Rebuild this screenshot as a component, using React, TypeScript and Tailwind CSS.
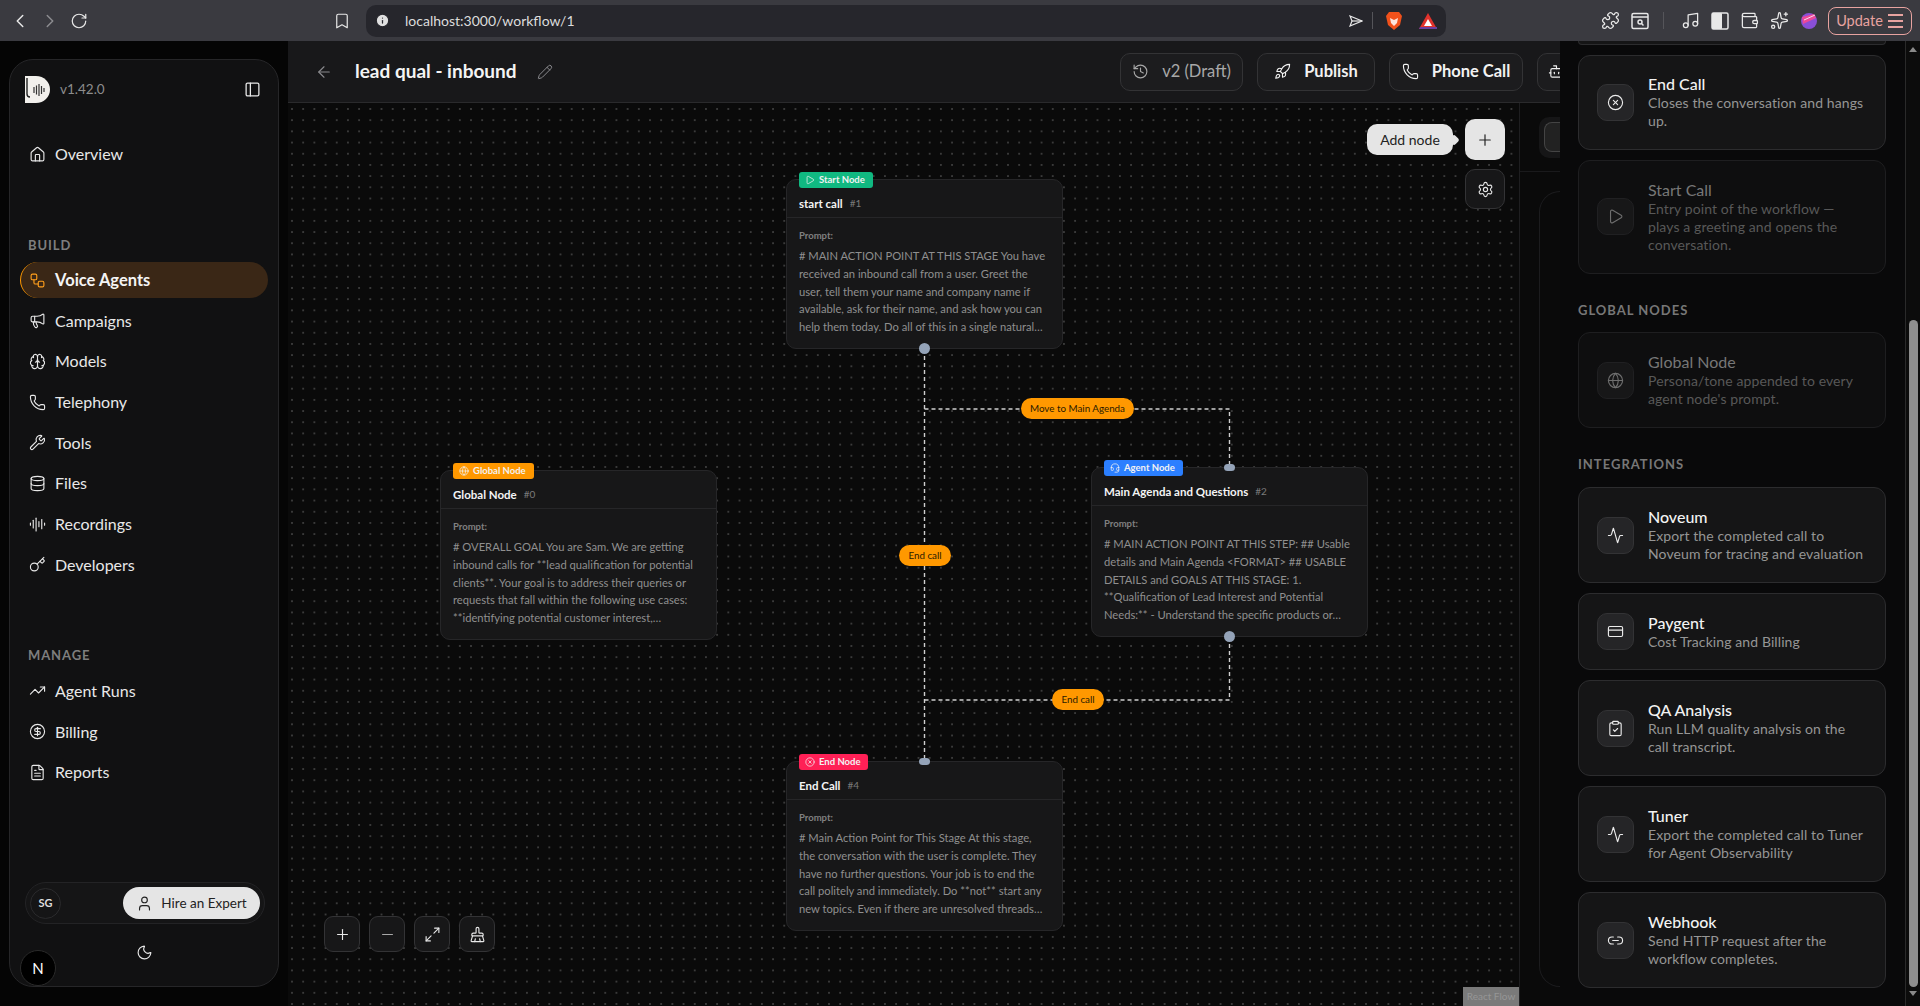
import React from "react";
import {
  Activity, ArrowLeft, AudioLines, Bookmark, Bot, Brain, BrushCleaning, ChevronLeft, ChevronRight,
  CircleDollarSign, CircleX, ClipboardCheck, CreditCard, Database, FileText, Globe, Headset, History,
  House, Info, Key, Link2, Maximize2, Megaphone, Minus, Moon, Music, PanelLeft, Pencil, Phone,
  Play, Plus, Puzzle, RotateCw, Rocket, Settings, Sparkles, TrendingUp, User, Wallet, Workflow, Wrench,
} from "lucide-react";

const nav1 = [
  { icon: Megaphone, label: "Campaigns" },
  { icon: Brain, label: "Models" },
  { icon: Phone, label: "Telephony" },
  { icon: Wrench, label: "Tools" },
  { icon: Database, label: "Files" },
  { icon: AudioLines, label: "Recordings" },
  { icon: Key, label: "Developers" },
];
const nav2 = [
  { icon: TrendingUp, label: "Agent Runs" },
  { icon: CircleDollarSign, label: "Billing" },
  { icon: FileText, label: "Reports" },
];

function NavItem({ icon: Icon, label }: { icon: any; label: string }) {
  return (
    <div className="flex h-[36px] items-center gap-[9px] pl-[9px] text-[16px] text-[#e8e8e8]">
      <Icon size={17} strokeWidth={1.6} className="shrink-0" />
      <span>{label}</span>
    </div>
  );
}

function SectionLabel({ children }: { children: React.ReactNode }) {
  return <div className="h-[16px] pl-[8px] text-[13px] font-bold leading-[16px] tracking-[0.9px] text-[#7e7e7e]">{children}</div>;
}

function Sidebar() {
  return (
    <aside className="h-full w-[288px] shrink-0 bg-[#050505] pl-[9px] pt-[18px]">
      <div className="relative flex h-[928px] w-[270px] flex-col rounded-[24px] border border-[#262628] bg-[#111112] px-[10px]">
        <div className="mt-[16px] flex h-[27px] items-center pl-[5px]">
          <svg width="25" height="27" viewBox="0 0 25 27">
            <path d="M0 0H11C19 0 25 6 25 13.5C25 21 19 27 11 27H0Z" fill="#f2f0ec" />
            <path d="M2 2V18" stroke="#222" strokeWidth="1.4" />
            <path d="M5 21C3 21 2 20 2 18" stroke="#222" strokeWidth="1.4" fill="none" />
            <path d="M9 11V17M11.5 9.5V18.5M14 8V20M16.5 10V18M19 12V16" stroke="#333" strokeWidth="1.2" />
          </svg>
          <span className="ml-[10px] text-[13.5px] text-[#8d8d8d]">v1.42.0</span>
          <PanelLeft size={17} strokeWidth={1.8} className="ml-auto mr-[7px] text-[#e8e8e8]" />
        </div>
        <div className="mt-[33px]">
          <NavItem icon={House} label="Overview" />
        </div>
        <div className="mt-[65px]">
          <SectionLabel>BUILD</SectionLabel>
        </div>
        <div className="mt-[9px] flex flex-col gap-[4.7px]">
          <div className="flex h-[36px] items-center gap-[9px] rounded-full border-l border-[#ff9800] bg-[#3a2716] pl-[8px] text-[16.5px] font-bold text-[#f4f4f4]">
            <Workflow size={17} strokeWidth={1.6} className="shrink-0 text-[#ff9f1c]" />
            <span>Voice Agents</span>
          </div>
          {nav1.map((n) => (
            <NavItem key={n.label} {...n} />
          ))}
        </div>
        <div className="mt-[64px]">
          <SectionLabel>MANAGE</SectionLabel>
        </div>
        <div className="mt-[10px] flex flex-col gap-[4.7px]">
          {nav2.map((n) => (
            <NavItem key={n.label} {...n} />
          ))}
        </div>
        <div className="mt-auto mb-[62px] ml-[5px] flex h-[42px] w-[240px] items-center justify-between rounded-full border border-[#232325] bg-[#151516] px-[4px]">
          <div className="flex h-[31px] w-[31px] items-center justify-center rounded-full border border-[#2a2a2c] text-[11px] font-bold text-[#dedede]">SG</div>
          <div className="flex h-[32px] w-[137px] items-center justify-center gap-[8px] rounded-full bg-[#e5e5e5] text-[13.5px] text-[#222]">
            <User size={17} strokeWidth={1.6} />
            <span>Hire an Expert</span>
          </div>
        </div>
        <Moon size={17} strokeWidth={1.6} className="absolute bottom-[25px] left-[126px] text-[#e8e8e8]" />
        <div className="absolute bottom-[0px] left-[10px] flex h-[36px] w-[36px] items-center justify-center rounded-full border border-[#2a2a2a] bg-black text-[15px] text-white">N</div>
      </div>
    </aside>
  );
}

function HeaderButton({ icon: Icon, label, muted, width }: { icon: any; label: string; muted?: boolean; width: string }) {
  return (
    <div className={`flex h-[38px] shrink-0 items-center justify-center gap-[13px] rounded-[10px] border border-[#333335] bg-[#1c1c1e] ${width} ${muted ? "text-[16.5px] text-[#a8a8a8]" : "text-[16.5px] font-bold text-[#f2f2f2]"}`}>
      <Icon size={17} strokeWidth={1.6} />
      <span>{label}</span>
    </div>
  );
}

function NodeCard({ pos, badge, badgeIcon: BadgeIcon, badgeClass, title, num, lines, top, bottom }: any) {
  return (
    <div className={`absolute h-[170px] w-[277px] rounded-[10px] border border-[#262628] bg-[#171718] ${pos}`}>
      <div className={`absolute left-[12px] top-[-8px] flex h-[15.5px] items-center gap-[4px] rounded-[3px] pl-[6px] pr-[6px] text-[9.5px] font-bold text-[#f2f2f2] ${badgeClass}`}>
        <BadgeIcon size={10} strokeWidth={1.8} />
        <span>{badge}</span>
      </div>
      <div className="flex h-[38px] items-end gap-[7px] border-b border-[#262628] pb-[6px] pl-[12px] text-[11.5px] leading-[15px]">
        <span className="font-bold text-[#f4f4f4]">{title}</span>
        <span className="text-[10px] text-[#7b7b7b]">{num}</span>
      </div>
      <div className="pl-[12px] pt-[11px]">
        <div className="text-[9.5px] font-bold leading-[14px] text-[#808080]">Prompt:</div>
        <div className="mt-[4px] text-[11.2px] leading-[17.8px] text-[#8f8f8f]">
          {lines.map((l: string) => (
            <div key={l} className="whitespace-nowrap">{l}</div>
          ))}
        </div>
      </div>
      {top && <div className="absolute left-[132px] top-[-4px] h-[7px] w-[11px] rounded-full bg-[#94a3b8]" />}
      {bottom && <div className="absolute bottom-[-6px] left-[132px] h-[11px] w-[11px] rounded-full bg-[#94a3b8]" />}
    </div>
  );
}

function Pill({ pos, children, width }: { pos: string; children: string; width: string }) {
  return (
    <div className={`absolute flex h-[21px] items-center justify-center rounded-full bg-[#ff9800] text-[9.8px] text-[#2a1a00] ${pos} ${width}`}>{children}</div>
  );
}

function CtrlBtn({ children }: { children: React.ReactNode }) {
  return <div className="flex h-[36px] w-[36px] items-center justify-center rounded-[9px] border border-[#333335] bg-[#171718] text-[#e8e8e8]">{children}</div>;
}

function Canvas() {
  return (
    <div className="relative h-full w-[1232px] shrink-0 overflow-hidden border-r border-[#1e1e20] bg-[#0a0a0a] bg-[radial-gradient(circle,#3a3a3a_0.7px,transparent_1px)] bg-[length:11.2px_11.2px] bg-[position:-1.6px_0.4px]">
      <svg className="absolute left-0 top-0" width="1232" height="903" fill="none">
        <path d="M636.5 246V658" stroke="#cfcfcf" strokeWidth="1.4" strokeDasharray="4 3" />
        <path d="M636.5 306H941.5V364" stroke="#cfcfcf" strokeWidth="1.4" strokeDasharray="4 3" />
        <path d="M941.5 534V597H636.5" stroke="#cfcfcf" strokeWidth="1.4" strokeDasharray="4 3" />
      </svg>
      <NodeCard
        pos="left-[498px] top-[76px]" badge="Start Node" badgeIcon={Play} badgeClass="w-[74px] bg-[#10b981]" title="start call" num="#1" bottom
        lines={["# MAIN ACTION POINT AT THIS STAGE You have", "received an inbound call from a user. Greet the", "user, tell them your name and company name if", "available, ask for their name, and ask how you can", "help them today. Do all of this in a single natural…"]}
      />
      <NodeCard
        pos="left-[152px] top-[367px]" badge="Global Node" badgeIcon={Globe} badgeClass="w-[81px] bg-[#ff9800]" title="Global Node" num="#0"
        lines={["# OVERALL GOAL You are Sam. We are getting", "inbound calls for **lead qualification for potential", "clients**. Your goal is to address their queries or", "requests that fall within the following use cases:", "**identifying potential customer interest,…"]}
      />
      <NodeCard
        pos="left-[803px] top-[364px]" badge="Agent Node" badgeIcon={Headset} badgeClass="w-[79px] bg-[#2b7fff]" title="Main Agenda and Questions" num="#2" top bottom
        lines={["# MAIN ACTION POINT AT THIS STEP: ## Usable", "details and Main Agenda <FORMAT> ## USABLE", "DETAILS and GOALS AT THIS STAGE: 1.", "**Qualification of Lead Interest and Potential", "Needs:** - Understand the specific products or…"]}
      />
      <NodeCard
        pos="left-[498px] top-[658px]" badge="End Node" badgeIcon={CircleX} badgeClass="w-[69px] bg-[#ff2056]" title="End Call" num="#4" top
        lines={["# Main Action Point for This Stage At this stage,", "the conversation with the user is complete. They", "have no further questions. Your job is to end the", "call politely and immediately. Do **not** start any", "new topics. Even if there are unresolved threads…"]}
      />
      <Pill pos="left-[733px] top-[295px]" width="w-[113px]">Move to Main Agenda</Pill>
      <Pill pos="left-[611px] top-[442px]" width="w-[52px]">End call</Pill>
      <Pill pos="left-[764px] top-[586px]" width="w-[52px]">End call</Pill>

      <div className="absolute left-[36px] top-[813px] flex gap-[9px]">
        <CtrlBtn><Plus size={17} strokeWidth={1.6} /></CtrlBtn>
        <CtrlBtn><Minus size={17} strokeWidth={1.6} className="text-[#a8a8a8]" /></CtrlBtn>
        <CtrlBtn><Maximize2 size={17} strokeWidth={1.6} /></CtrlBtn>
        <CtrlBtn><BrushCleaning size={17} strokeWidth={1.6} /></CtrlBtn>
      </div>

      <div className="absolute left-[1079px] top-[21px] flex h-[31px] w-[86px] items-center justify-center rounded-[10px] bg-[#e5e5e5] text-[14px] text-[#222]">Add node</div>
      <div className="absolute left-[1162px] top-[32.5px] h-[8px] w-[8px] rotate-45 rounded-[2px] bg-[#e5e5e5]" />
      <div className="absolute left-[1177px] top-[16px] flex h-[41px] w-[40px] items-center justify-center rounded-[10px] bg-[#e5e5e5] text-[#222]"><Plus size={18} strokeWidth={1.6} /></div>
      <div className="absolute left-[1177px] top-[66px] flex h-[40px] w-[40px] items-center justify-center rounded-[10px] border border-[#333335] bg-[#171718] text-[#e8e8e8]"><Settings size={17} strokeWidth={1.6} /></div>

      <div className="absolute bottom-0 right-0 flex h-[19px] w-[56px] items-center justify-center bg-[#7a7a7a] text-[10px] text-[#969696]">React Flow</div>
    </div>
  );
}

function ToolCard({ icon: Icon, title, desc, h, dim }: { icon: any; title: string; desc: string[]; h: string; dim?: boolean }) {
  return (
    <div className={`flex shrink-0 items-center gap-[14px] rounded-[12px] border pl-[18px] ${h} ${dim ? "border-[#1e1e20] bg-[#0e0e0f]" : "border-[#2c2c2e] bg-[#151516]"}`}>
      <div className={`flex h-[37px] w-[37px] shrink-0 items-center justify-center rounded-[10px] border ${dim ? "border-[#202022] bg-[#171718] text-[#6e6e6e]" : "border-[#333335] bg-[#252527] text-[#ececec]"}`}>
        <Icon size={17} strokeWidth={1.6} />
      </div>
      <div>
        <div className={`text-[16px] leading-[20px] ${dim ? "text-[#777]" : "font-medium text-[#f2f2f2]"}`}>{title}</div>
        <div className={`text-[14px] leading-[18px] tracking-[0.1px] ${dim ? "text-[#585858]" : "text-[#959595]"}`}>
          {desc.map((d) => (
            <div key={d} className="whitespace-nowrap">{d}</div>
          ))}
        </div>
      </div>
    </div>
  );
}

function DrawerLabel({ children, cls }: { children: string; cls: string }) {
  return <div className={`h-[16px] text-[13px] font-bold leading-[16px] tracking-[1px] text-[#777] ${cls}`}>{children}</div>;
}

function Drawer() {
  return (
    <div className="flex h-full w-[345px] shrink-0 flex-col overflow-hidden bg-[#09090a] pl-[18px] pr-[19px]">
      <div className="h-[4px] shrink-0 rounded-b-[12px] border-x border-b border-[#2c2c2e] bg-[#151516]" />
      <div className="mt-[9.5px] flex flex-col gap-[9.5px]">
        <ToolCard icon={CircleX} title="End Call" desc={["Closes the conversation and hangs", "up."]} h="h-[95.5px]" />
        <ToolCard icon={Play} title="Start Call" dim desc={["Entry point of the workflow —", "plays a greeting and opens the", "conversation."]} h="h-[114.5px]" />
      </div>
      <DrawerLabel cls="mt-[28px]">GLOBAL NODES</DrawerLabel>
      <div className="mt-[14px]">
        <ToolCard icon={Globe} title="Global Node" dim desc={["Persona/tone appended to every", "agent node's prompt."]} h="h-[96px]" />
      </div>
      <DrawerLabel cls="mt-[28px]">INTEGRATIONS</DrawerLabel>
      <div className="mt-[15px] flex flex-col gap-[10px]">
        <ToolCard icon={Activity} title="Noveum" desc={["Export the completed call to", "Noveum for tracing and evaluation"]} h="h-[96px]" />
        <ToolCard icon={CreditCard} title="Paygent" desc={["Cost Tracking and Billing"]} h="h-[77px]" />
        <ToolCard icon={ClipboardCheck} title="QA Analysis" desc={["Run LLM quality analysis on the", "call transcript."]} h="h-[96px]" />
        <ToolCard icon={Activity} title="Tuner" desc={["Export the completed call to Tuner", "for Agent Observability"]} h="h-[96px]" />
        <ToolCard icon={Link2} title="Webhook" desc={["Send HTTP request after the", "workflow completes."]} h="h-[96px]" />
      </div>
    </div>
  );
}

function Scrollbar() {
  return (
    <div className="flex h-full w-[15px] shrink-0 flex-col items-center border-l border-[#2a2a2a] bg-[#0c0c0c]">
      <div className="mt-[6px] h-0 w-0 border-x-[4px] border-b-[5px] border-x-transparent border-b-[#8a8a8a]" />
      <div className="mt-[268px] h-[667px] w-[9px] shrink-0 rounded-full bg-[#8e8e8e]" />
      <div className="mt-[4px] h-0 w-0 border-x-[4px] border-t-[5px] border-x-transparent border-t-[#8a8a8a]" />
    </div>
  );
}

function Toolbar() {
  return (
    <div className="flex h-[41px] w-full shrink-0 items-center bg-[#3a3a40] text-[#e8e8e8]">
      <div className="flex w-[355px] items-center pl-[9px]">
        <ChevronLeft size={22} strokeWidth={1.6} />
        <ChevronRight size={22} strokeWidth={1.6} className="ml-[8px] text-[#8c8c90]" />
        <RotateCw size={18} strokeWidth={1.6} className="ml-[9px]" />
        <Bookmark size={18} strokeWidth={1.6} className="ml-[245px]" />
      </div>
      <div className="ml-[11px] flex h-[32px] w-[1080px] items-center rounded-[10px] bg-[#26262c] pl-[9px]">
        <Info size={15} fill="#e0e0e0" stroke="#26262c" strokeWidth={2} />
        <span className="ml-[15px] text-[14px] text-[#dcdcdc]">localhost:3000/workflow/1</span>
        <svg width="14" height="12" viewBox="0 0 14 12" fill="none" stroke="#e8e8e8" strokeWidth="1.2" className="ml-auto">
          <path d="M1 1L13 6L1 11L3 6Z" />
          <path d="M3 6H13" />
        </svg>
        <div className="ml-[9px] h-[17px] w-px bg-[#55555a]" />
        <svg width="18" height="20" viewBox="0 0 18 20" className="ml-[12px]">
          <path d="M4 1H14L17 5L15 14L9 19L3 14L1 5Z" fill="#f1511b" />
          <path d="M5 7L9 9L13 7L12 12L9 15L6 12Z" fill="#fff" opacity=".85" />
        </svg>
        <svg width="20" height="18" viewBox="0 0 20 18" className="ml-[15px] mr-[8px]">
          <path d="M10 1L19 17H1Z" fill="#e1322c" />
          <path d="M10 7L14 14H6Z" fill="#fff" />
          <path d="M1 17H19V15H2Z" fill="#6b3fa0" />
        </svg>
      </div>
      <div className="ml-[155px] flex items-center">
        <Puzzle size={19} strokeWidth={1.6} />
        <svg width="18" height="18" viewBox="0 0 18 18" fill="none" stroke="currentColor" strokeWidth="1.5" className="ml-[11px]">
          <rect x="1" y="1.5" width="16" height="15" rx="1.5" />
          <path d="M1 5H17" />
          <circle cx="9" cy="10" r="2" />
          <path d="M10.5 11.5L12.5 13.5" />
        </svg>
        <div className="ml-[14px] h-[17px] w-px bg-[#55555a]" />
        <Music size={19} strokeWidth={1.6} className="ml-[16.5px]" />
        <svg width="18" height="18" viewBox="0 0 18 18" className="ml-[11px]">
          <rect x="1" y="1" width="16" height="16" rx="1.5" fill="none" stroke="#e8e8e8" strokeWidth="1.5" />
          <rect x="1" y="1" width="10" height="16" rx="1" fill="#e8e8e8" />
        </svg>
        <Wallet size={19} strokeWidth={1.6} className="ml-[11px]" />
        <Sparkles size={19} strokeWidth={1.6} className="ml-[11px]" />
        <svg width="18" height="18" viewBox="0 0 18 18" className="ml-[11px]">
          <circle cx="9" cy="9" r="8" fill="#8a4fd8" />
          <path d="M2 5L14 2L16 6L3 12Z" fill="#ec4899" />
          <path d="M4 8L15 3" stroke="#fff" strokeWidth=".8" />
        </svg>
        <div className="ml-[10px] flex h-[28px] w-[84px] items-center justify-center gap-[5px] rounded-[8px] border border-[#e8a3a0] text-[14.5px] text-[#e8a3a0]">
          <span>Update</span>
          <div className="flex w-[15px] flex-col gap-[4px]">
            <div className="h-[2px] bg-[#e8a3a0]" />
            <div className="h-[2px] bg-[#e8a3a0]" />
            <div className="h-[2px] bg-[#e8a3a0]" />
          </div>
        </div>
      </div>
    </div>
  );
}

function RearPanel() {
  return (
    <div className="flex h-full w-[40px] shrink-0 flex-col bg-[#0a0a0a]">
      <div className="h-[69px] shrink-0 border-b border-[#1a1a1c] pl-[19px] pt-[14px]">
        <div className="h-[41px] rounded-l-[10px] bg-[#161617] py-[5px] pl-[5px]">
          <div className="h-[30px] rounded-l-[8px] border border-r-0 border-[#444] bg-[#222]" />
        </div>
      </div>
      <div className="ml-[19px] mt-[19px] h-[796px] rounded-l-[24px] border border-r-0 border-[#1c1c1e]" />
    </div>
  );
}

export default function App() {
  return (
    <div className="flex h-[1006px] w-[1920px] flex-col overflow-hidden bg-black font-['Lato','Noto_Sans',sans-serif]">
      <Toolbar />
      <div className="flex min-h-0 flex-1">
        <Sidebar />
        <div className="flex w-[1272px] shrink-0 flex-col">
          <div className="flex h-[62px] shrink-0 items-center border-b border-[#2a2a2c] bg-[#18181a]">
            <div className="flex flex-1 items-center pl-[27px]">
              <ArrowLeft size={18} strokeWidth={1.5} className="text-[#8a8a8e]" />
              <span className="ml-[22px] text-[19px] font-bold text-[#f4f4f4]">lead qual - inbound</span>
              <Pencil size={16} strokeWidth={1.5} className="ml-[20px] text-[#8a8a8e]" />
            </div>
            <div className="flex w-[440px] shrink-0 gap-[14px] overflow-hidden">
              <HeaderButton icon={History} label="v2 (Draft)" muted width="w-[123px]" />
              <HeaderButton icon={Rocket} label="Publish" width="w-[118px]" />
              <HeaderButton icon={Phone} label="Phone Call" width="w-[134px]" />
              <div className="flex h-[38px] w-[120px] shrink-0 items-center rounded-[10px] border border-[#333335] bg-[#1c1c1e] pl-[10px] text-[#f2f2f2]">
                <Bot size={17} strokeWidth={1.6} />
              </div>
            </div>
          </div>
          <div className="flex min-h-0 flex-1">
            <Canvas />
            <RearPanel />
          </div>
        </div>
        <Drawer />
        <Scrollbar />
      </div>
    </div>
  );
}
